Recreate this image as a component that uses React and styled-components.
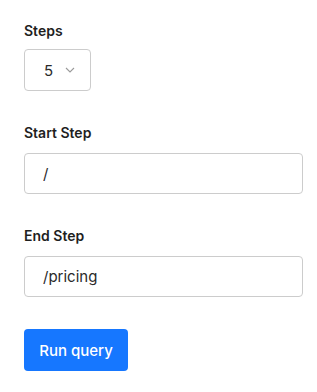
import styled, { createGlobalStyle } from 'styled-components';

const GlobalStyle = createGlobalStyle`
  body {
    margin: 0;
    background: #ffffff;
    font-family: Inter, "Noto Sans", sans-serif;
  }
`

function App() {
  return (
    <Page>
      <GlobalStyle />
      <Field $gap={8}>
        <Label>Steps</Label>
        <Select>
          <span>5</span>
          <svg width="10" height="6" viewBox="0 0 10 6" fill="none">
            <path d="M1 1l4 4 4-4" stroke="#9a9a9a" strokeWidth="1.1" />
          </svg>
        </Select>
      </Field>
      <Field $gap={10}>
        <Label>Start Step</Label>
        <Input defaultValue="/" />
      </Field>
      <Field $gap={10}>
        <Label>End Step</Label>
        <Input defaultValue="/pricing" />
      </Field>
      <Button>Run query</Button>
    </Page>
  )
}

const Page = styled.div`
  display: flex;
  flex-direction: column;
  align-items: flex-start;
  gap: 32px;
  padding: 21px 14px 0 24px;
`

const Field = styled.div`
  display: flex;
  flex-direction: column;
  gap: ${props => props.$gap}px;
  align-self: stretch;
`

const Label = styled.div`
  font-size: 14px;
  line-height: 20px;
  font-weight: 600;
  color: #1f1f1f;
`

const Select = styled.div`
  box-sizing: border-box;
  display: flex;
  align-items: center;
  gap: 12px;
  width: 67px;
  height: 42px;
  padding: 0 0 0 19px;
  border: 1px solid #cccccc;
  border-radius: 4px;
  font-size: 15px;
  color: #2a2a2a;
`

const Input = styled.input`
  box-sizing: border-box;
  width: 279px;
  height: 41px;
  padding: 0 18px;
  border: 1px solid #cccccc;
  border-radius: 4px;
  font-family: inherit;
  font-size: 15px;
  color: #2a2a2a;
  outline: none;
`

const Button = styled.button`
  box-sizing: border-box;
  width: 104px;
  height: 42px;
  border: none;
  border-radius: 4px;
  background: #1677ff;
  color: #ffffff;
  font-family: inherit;
  font-size: 15px;
  font-weight: 500;
`

export default App
